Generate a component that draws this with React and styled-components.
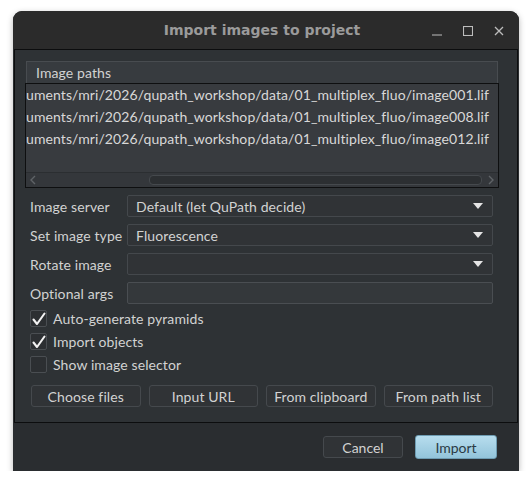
import React from 'react';
import styled, { createGlobalStyle } from 'styled-components';

const GlobalStyle = createGlobalStyle`
  html, body {
    margin: 0;
    padding: 0;
    background: #ffffff;
  }
  body {
    font-family: Lato, "Noto Sans", sans-serif;
    font-size: 14px;
  }
`;

const paths = [
  'uments/mri/2026/qupath_workshop/data/01_multiplex_fluo/image001.lif',
  'uments/mri/2026/qupath_workshop/data/01_multiplex_fluo/image008.lif',
  'uments/mri/2026/qupath_workshop/data/01_multiplex_fluo/image012.lif',
];

const fields = [
  { label: 'Image server', value: 'Default (let QuPath decide)', combo: true },
  { label: 'Set image type', value: 'Fluorescence', combo: true },
  { label: 'Rotate image', value: '', combo: true },
  { label: 'Optional args', value: '', combo: false },
];

const options = [
  { label: 'Auto-generate pyramids', checked: true },
  { label: 'Import objects', checked: true },
  { label: 'Show image selector', checked: false },
];

const sources = ['Choose files', 'Input URL', 'From clipboard', 'From path list'];

function CheckIcon() {
  return (
    <svg width="14" height="14" viewBox="0 0 14 14">
      <path
        d="M1.5 7.5 L5 12 L12.5 1.5"
        fill="none"
        stroke="#f2f2f2"
        strokeWidth="2.1"
        strokeLinecap="round"
        strokeLinejoin="round"
      />
    </svg>
  );
}

function ArrowDown() {
  return (
    <svg width="10" height="6" viewBox="0 0 10 6">
      <path d="M0 0 L10 0 L5 6 Z" fill="#e4e4e4" />
    </svg>
  );
}

function Chevron({ flip }) {
  return (
    <svg width="6" height="10" viewBox="0 0 6 10">
      <path
        d={flip ? 'M1 1 L5 5 L1 9' : 'M5 1 L1 5 L5 9'}
        fill="none"
        stroke="#5f6367"
        strokeWidth="1.4"
      />
    </svg>
  );
}

function WindowControls() {
  return (
    <Controls>
      <svg width="10" height="10" viewBox="0 0 10 10">
        <path d="M0 9 H10" stroke="#bdbdbd" strokeWidth="1.2" />
      </svg>
      <svg width="10" height="10" viewBox="0 0 10 10">
        <rect x="0.5" y="0.5" width="9" height="9" fill="none" stroke="#bdbdbd" strokeWidth="1.1" />
      </svg>
      <svg width="10" height="10" viewBox="0 0 10 10">
        <path d="M1 1 L9 9 M9 1 L1 9" stroke="#bdbdbd" strokeWidth="1.3" />
      </svg>
    </Controls>
  );
}

export default function App() {
  return (
    <>
      <GlobalStyle />
      <Stage>
        <Window>
          <TitleBar>
            <Title>Import images to project</Title>
            <WindowControls />
          </TitleBar>
          <Panel>
            <Table>
              <TableHeader>Image paths</TableHeader>
              <List>
                <Rows>
                  {paths.map((p) => (
                    <PathRow key={p}>{p}</PathRow>
                  ))}
                </Rows>
                <HScroll>
                  <Chevron />
                  <Track>
                    <Thumb />
                  </Track>
                  <Chevron flip />
                </HScroll>
              </List>
            </Table>

            <Form>
              {fields.map((f) => (
                <React.Fragment key={f.label}>
                  <FieldLabel>{f.label}</FieldLabel>
                  {f.combo ? (
                    <Combo>
                      <span>{f.value}</span>
                      <ArrowDown />
                    </Combo>
                  ) : (
                    <TextField />
                  )}
                </React.Fragment>
              ))}
            </Form>

            <Options>
              {options.map((o) => (
                <CheckRow key={o.label}>
                  <CheckBox>{o.checked && <CheckIcon />}</CheckBox>
                  <span>{o.label}</span>
                </CheckRow>
              ))}
            </Options>

            <SourceButtons>
              {sources.map((s) => (
                <Button key={s}>{s}</Button>
              ))}
            </SourceButtons>
          </Panel>
          <Footer>
            <Button $width={80}>Cancel</Button>
            <Button $width={82} $primary>
              Import
            </Button>
          </Footer>
        </Window>
      </Stage>
    </>
  );
}

const Stage = styled.div`
  padding: 11px 0 0 13px;
`;

const Window = styled.div`
  width: 506px;
  height: 460px;
  display: flex;
  flex-direction: column;
  background: #2a2d30;
  border-radius: 9px 9px 0 0;
  overflow: hidden;
  box-shadow: 0 2px 6px rgba(0, 0, 0, 0.28);
`;

const TitleBar = styled.div`
  position: relative;
  height: 38px;
  flex: none;
  display: flex;
  align-items: center;
  justify-content: center;
  background: #2b2b2b;
`;

const Title = styled.div`
  font-family: "DejaVu Sans", sans-serif;
  font-weight: bold;
  font-size: 14px;
  color: #9b9b9b;
  margin-left: -8px;
`;

const Controls = styled.div`
  position: absolute;
  right: 15px;
  top: 15px;
  display: flex;
  gap: 21px;
`;

const Panel = styled.div`
  height: 374px;
  flex: none;
  box-sizing: border-box;
  margin: 0 1px;
  border: 1px solid #0c0d0e;
  background: #2e3235;
  padding: 11px 18px 0 10px;
  display: flex;
  flex-direction: column;
  color: #d2d2d2;
  letter-spacing: 0.1px;
`;

const Table = styled.div`
  display: flex;
  flex-direction: column;
`;

const TableHeader = styled.div`
  height: 22px;
  box-sizing: border-box;
  margin: 0 1px;
  padding-left: 9px;
  display: flex;
  align-items: center;
  background: #373b3f;
  border: 1px solid #484c50;
  border-bottom: none;
  font-size: 14px;
`;

const List = styled.div`
  height: 105px;
  box-sizing: border-box;
  border: 1px solid #0e0f10;
  background: #383b3f;
  display: flex;
  flex-direction: column;
  overflow: hidden;
`;

const Rows = styled.div`
  flex: 1;
  overflow: hidden;
`;

const PathRow = styled.div`
  height: 22px;
  line-height: 22px;
  white-space: nowrap;
  font-size: 14px;
  color: #d8d8d8;
`;

const HScroll = styled.div`
  height: 14px;
  flex: none;
  display: flex;
  align-items: center;
  gap: 6px;
  padding: 0 4px;
  background: #34373b;
  border-top: 1px solid #2b2e31;
`;

const Track = styled.div`
  flex: 1;
  display: flex;
  padding-left: 107px;
`;

const Thumb = styled.div`
  flex: 1;
  height: 8px;
  border-radius: 4px;
  background: #2c2f32;
  border: 1px solid #45494d;
`;

const Form = styled.div`
  display: grid;
  grid-template-columns: 97px 1fr;
  grid-auto-rows: 22px;
  row-gap: 7px;
  margin: 7px 6px 0 5px;
  align-items: center;
`;

const FieldLabel = styled.div`
  font-size: 14px;
  white-space: nowrap;
`;

const Combo = styled.div`
  height: 22px;
  box-sizing: border-box;
  display: flex;
  align-items: center;
  justify-content: space-between;
  padding: 0 9px 0 8px;
  background: #303336;
  border: 1px solid #44484c;
  border-radius: 2px;
  font-size: 14px;
`;

const TextField = styled.div`
  height: 22px;
  box-sizing: border-box;
  background: #34383b;
  border: 1px solid #4a4e52;
  border-radius: 2px;
`;

const Options = styled.div`
  display: flex;
  flex-direction: column;
  gap: 6px;
  margin: 6px 0 0 5px;
`;

const CheckRow = styled.div`
  display: flex;
  align-items: center;
  gap: 6px;
  height: 17px;
  font-size: 14px;
`;

const CheckBox = styled.div`
  width: 17px;
  height: 17px;
  box-sizing: border-box;
  display: flex;
  align-items: center;
  justify-content: center;
  background: #2c2f32;
  border: 1px solid #4a4e52;
  border-radius: 2px;
`;

const SourceButtons = styled.div`
  display: grid;
  grid-template-columns: repeat(4, 1fr);
  gap: 8px;
  margin: 12px 6px 0 6px;
`;

const Button = styled.div`
  height: ${(p) => (p.$primary ? '24px' : '22px')};
  width: ${(p) => (p.$width ? `${p.$width}px` : 'auto')};
  box-sizing: border-box;
  display: flex;
  align-items: center;
  justify-content: center;
  font-size: 14px;
  white-space: nowrap;
  border-radius: 3px;
  color: ${(p) => (p.$primary ? '#2b3a44' : '#d2d2d2')};
  background: ${(p) =>
    p.$primary ? 'linear-gradient(#b7ddee, #93c4da)' : '#303336'};
  border: 1px solid ${(p) => (p.$primary ? '#6e9cb2' : '#45494d')};
`;

const Footer = styled.div`
  flex: 1;
  display: flex;
  align-items: center;
  justify-content: flex-end;
  gap: 12px;
  padding-right: 22px;
  background: #2a2d30;
`;
